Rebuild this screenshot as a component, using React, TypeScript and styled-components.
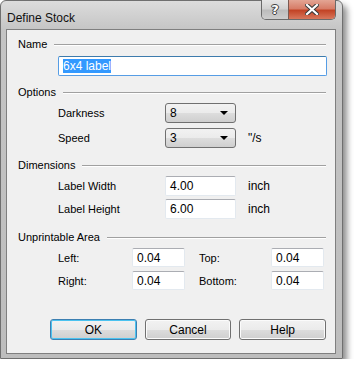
import React, { FC } from 'react'
import styled, { createGlobalStyle } from 'styled-components'

const Global = createGlobalStyle`
	html, body {
		margin: 0;
		padding: 0;
		background: #ffffff;
	}
	body {
		font-family: 'Liberation Sans', Arial, sans-serif;
		font-size: 11px;
		color: #000;
	}
`

const Window = styled.div`
	width: 343px;
	height: 359px;
	box-sizing: border-box;
	border: 1px solid #6f6f6f;
	border-radius: 6px 6px 0 0;
	background: linear-gradient(#dcdcdc, #c4c4c4 30px, #bdbdbd);
	box-shadow: 4px 5px 6px rgba(0, 0, 0, 0.45);
	display: flex;
	flex-direction: column;
	padding: 0 6px 4px 5px;
`

const TitleBar = styled.div`
	height: 28px;
	display: flex;
	align-items: flex-start;
	justify-content: space-between;
`

const Title = styled.div`
	font-family: 'Liberation Sans', Arial, sans-serif;
	font-size: 12px;
	padding: 10px 0 0 1px;
	color: #111;
`

const Caption = styled.div`
	display: flex;
	margin-top: -1px;
	border: 1px solid #6a6a6a;
	border-top: none;
	border-radius: 0 0 5px 5px;
	overflow: hidden;
`

const CapButton = styled.div<{ $close?: boolean }>`
	width: ${({ $close }) => ($close ? 46 : 26)}px;
	height: 19px;
	display: flex;
	align-items: center;
	justify-content: center;
	background: ${({ $close }) =>
		$close
			? 'linear-gradient(#e3a594, #d77d68 45%, #c24426 55%, #d8775c)'
			: 'linear-gradient(#e6e6e6, #d2d2d2 45%, #bcbcbc 55%, #cdcdcd)'};
	border-left: ${({ $close }) => ($close ? '1px solid #7a5a52' : 'none')};
	color: #fff;
	font-family: 'DejaVu Sans', sans-serif;
	font-weight: bold;
	font-size: 13px;
	text-shadow: 0 0 1px #333, 1px 0 0 #444, -1px 0 0 #444, 0 1px 0 #444, 0 -1px 0 #444;
`

const Client = styled.div`
	flex: 1;
	border: 1px solid #7f7f7f;
	background: #f0f0f0;
	padding: 7px 9px 0 11px;
	display: flex;
	flex-direction: column;
`

const SectionHead = styled.div<{ $top: number }>`
	margin-top: ${({ $top }) => $top}px;
	height: 14px;
	display: flex;
	align-items: center;
	gap: 7px;
	&::after {
		content: '';
		flex: 1;
		height: 1px;
		background: #a0a0a0;
		border-bottom: 1px solid #ffffff;
		margin-top: 1px;
	}
`

const Row = styled.div<{ $top: number }>`
	margin-top: ${({ $top }) => $top}px;
	padding-left: 40px;
	display: flex;
	align-items: center;
`

const Label = styled.div<{ $w: number; $indent?: number }>`
	width: ${({ $w }) => $w}px;
	padding-left: ${({ $indent }) => $indent ?? 0}px;
	box-sizing: border-box;
	flex-shrink: 0;
`

const TextBox = styled.div<{ $w: number; $h?: number; $focus?: boolean }>`
	width: ${({ $w }) => $w}px;
	height: ${({ $h }) => $h ?? 20}px;
	box-sizing: border-box;
	background: #fff;
	border: 1px solid ${({ $focus }) => ($focus ? '#569de5' : '#e3e9ef')};
	border-top-color: ${({ $focus }) => ($focus ? '#3d7bad' : '#abadb3')};
	border-radius: 2px;
	padding: 0 4px;
	display: flex;
	align-items: center;
	font-size: 12px;
	flex-shrink: 0;
`

const Selected = styled.span`
	background: #3399ff;
	color: #fff;
`

const Select = styled.div`
	width: 71px;
	height: 20px;
	box-sizing: border-box;
	border: 1px solid #707070;
	border-radius: 3px;
	background: linear-gradient(#f2f2f2, #ebebeb 50%, #dddddd 51%, #cfcfcf);
	display: flex;
	align-items: center;
	justify-content: space-between;
	padding: 0 7px 0 4px;
	font-size: 12px;
	flex-shrink: 0;
	&::after {
		content: '';
		border-left: 4px solid transparent;
		border-right: 4px solid transparent;
		border-top: 4px solid #000;
	}
`

const Unit = styled.div`
	margin-left: 12px;
	font-size: 12px;
`

const Buttons = styled.div`
	margin-top: 29px;
	padding-left: 32px;
	display: flex;
	gap: 8px;
`

const Button = styled.div<{ $default?: boolean }>`
	width: 87px;
	height: 21px;
	box-sizing: border-box;
	border: 1px solid ${({ $default }) => ($default ? '#3c7fb1' : '#707070')};
	border-radius: 3px;
	background: linear-gradient(#f2f2f2, #ebebeb 50%, #dddddd 51%, #cfcfcf);
	box-shadow: ${({ $default }) => ($default ? 'inset 0 0 0 1px #4cc3f0' : 'inset 0 0 0 1px #fbfbfb')};
	display: flex;
	align-items: center;
	justify-content: center;
	font-size: 12px;
`

const App: FC = () => {
	return <>
		<Global/>
		<Window>
			<TitleBar>
				<Title>Define Stock</Title>
				<Caption>
					<CapButton>?</CapButton>
					<CapButton $close>
						<svg width="14" height="11" viewBox="0 0 14 11">
							<path d="M2 1 L12 10 M12 1 L2 10" stroke="#3a3a3a" strokeWidth="4.2" strokeLinecap="square"/>
							<path d="M2 1 L12 10 M12 1 L2 10" stroke="#ffffff" strokeWidth="2.2" strokeLinecap="square"/>
						</svg>
					</CapButton>
				</Caption>
			</TitleBar>
			<Client>
				<SectionHead $top={0}>Name</SectionHead>
				<Row $top={5}>
					<TextBox $w={269} $focus><Selected>6x4 label</Selected></TextBox>
				</Row>

				<SectionHead $top={9}>Options</SectionHead>
				<Row $top={4}>
					<Label $w={107}>Darkness</Label>
					<Select>8</Select>
				</Row>
				<Row $top={5}>
					<Label $w={107}>Speed</Label>
					<Select>3</Select>
					<Unit>"/s</Unit>
				</Row>

				<SectionHead $top={10}>Dimensions</SectionHead>
				<Row $top={4}>
					<Label $w={107}>Label Width</Label>
					<TextBox $w={71}>4.00</TextBox>
					<Unit>inch</Unit>
				</Row>
				<Row $top={3}>
					<Label $w={107}>Label Height</Label>
					<TextBox $w={71}>6.00</TextBox>
					<Unit>inch</Unit>
				</Row>

				<SectionHead $top={11}>Unprintable Area</SectionHead>
				<Row $top={4}>
					<Label $w={74}>Left:</Label>
					<TextBox $w={53} $h={19}>0.04</TextBox>
					<Label $w={86} $indent={14}>Top:</Label>
					<TextBox $w={53} $h={19}>0.04</TextBox>
				</Row>
				<Row $top={4}>
					<Label $w={74}>Right:</Label>
					<TextBox $w={53} $h={19}>0.04</TextBox>
					<Label $w={86} $indent={14}>Bottom:</Label>
					<TextBox $w={53} $h={19}>0.04</TextBox>
				</Row>

				<Buttons>
					<Button $default>OK</Button>
					<Button>Cancel</Button>
					<Button>Help</Button>
				</Buttons>
			</Client>
		</Window>
	</>
}

export default App
